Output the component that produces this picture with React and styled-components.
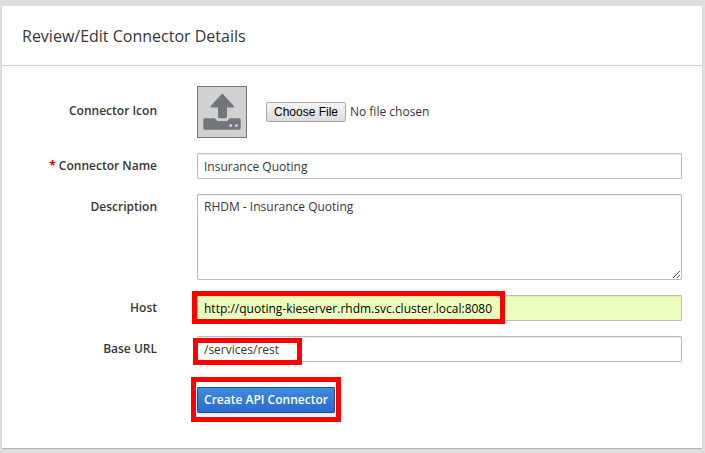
import React from "react";
import styled, { createGlobalStyle, css } from "styled-components";

const GlobalStyle = createGlobalStyle`
  *, *::before, *::after { box-sizing: border-box; }
  html, body { margin: 0; height: 100%; overflow: hidden; background: #dfdfdf; }
  body { font-family: "Open Sans", "Liberation Sans", sans-serif; font-size: 12px; line-height: 20px; color: #363636; }
`;

const Page = styled.main`
  height: 453px;
  padding: 6px 3px 5px 2px;
  background: #dfdfdf;
`;

const Card = styled.section`
  height: 442px;
  background: #fff;
  box-shadow: 0 1px 1px rgba(3, 3, 3, 0.18);
`;

const CardHeader = styled.header`
  height: 60px;
  padding: 20px 20px 0;
  border-bottom: 1px solid #d1d1d1;
`;

const Title = styled.h2`
  margin: 0;
  font-size: 16px;
  font-weight: 400;
  line-height: 20px;
`;

const Form = styled.form`
  display: flex;
  flex-direction: column;
  gap: 15px;
  padding: 20px 20px 0 0;
`;

const Row = styled.div`
  display: grid;
  grid-template-columns: 155px 485px;
  column-gap: 40px;
`;

const Label = styled.label`
  padding-top: ${(p) => p.$top ?? 3}px;
  text-align: right;
  font-weight: 600;
  white-space: nowrap;
`;

const Required = styled.span`
  color: #e00000;
  font-weight: 700;
`;

const FieldSlot = styled.div`
  position: relative;
  display: flex;
`;

const fieldStyle = css`
  display: block;
  width: 100%;
  margin: 0;
  border: 1px solid #bbb;
  border-radius: 1px;
  box-shadow: inset 0 1px 1px rgba(3, 3, 3, 0.075);
  font: inherit;
  color: #363636;
  outline: none;
`;

const Input = styled.input`
  ${fieldStyle}
  height: 26px;
  padding: 2px 6px;
  background: ${(p) => (p.$autofilled ? "#edffbc" : "#fff")};
  color: ${(p) => (p.$autofilled ? "#000" : "#363636")};
`;

const TextArea = styled.textarea`
  ${fieldStyle}
  height: 86px;
  padding: 2px 6px;
  background: #fff;
  resize: none;
`;

const Grip = styled.svg`
  position: absolute;
  right: 2px;
  bottom: 2px;
`;

const UploadRow = styled.div`
  display: flex;
  align-items: center;
`;

const IconTile = styled.div`
  width: 50px;
  height: 52px;
  margin-right: 19px;
  background: #d1d1d1;
  border: 1px solid #72767b;
`;

const FileButton = styled.button`
  width: 80px;
  height: 20px;
  padding: 0;
  border: 1px solid #a6a6a6;
  border-radius: 2px;
  background: linear-gradient(#f5f5f5, #dcdcdc);
  color: #000;
  font: 12px/17px "Liberation Sans", Arial, sans-serif;
`;

const FileStatus = styled.span`
  margin-left: 4px;
`;

const Actions = styled.div`
  display: flex;
  padding: 10px 0 0 195px;
`;

const ButtonSlot = styled.div`
  position: relative;
`;

const PrimaryButton = styled.button`
  display: block;
  width: 138px;
  height: 26px;
  padding: 0 0 1px;
  border: 1px solid #1f4b99;
  border-radius: 1px;
  background: linear-gradient(#3b8ddd, #2d69ce);
  box-shadow: 0 2px 3px rgba(3, 3, 3, 0.1);
  color: #fff;
  font: 600 12px/20px "Open Sans", sans-serif;
  white-space: nowrap;
`;

const Highlight = styled.div`
  position: absolute;
  left: ${(p) => p.$left}px;
  top: ${(p) => p.$top}px;
  width: ${(p) => p.$width}px;
  height: ${(p) => p.$height}px;
  border: 5px solid #f00;
  pointer-events: none;
`;

function UploadIcon() {
  return (
    <svg width="48" height="50" viewBox="0 0 48 50" fill="#72767b" aria-hidden="true">
      <path d="M23.5 7.2Q24.3 6.500 25.100 7.200L35.900 18.900Q36.600 20.500 35.200 20.500H29V29.700Q29 31.200 27.500 31.200H21.500Q20 31.200 20 29.700V20.500H13.400Q12 20.500 12.700 18.900Z" />
      <path fillRule="evenodd" d="M7 31.200h9.300c1 0 1.300.600 1.700 1.400.600 1.100 1.500 1.500 2.700 1.500h7.200c1.300 0 2.100-.500 2.600-1.600.400-.900.800-1.300 1.700-1.300H41q1.700 0 1.700 1.700v8.100q0 1.700-1.700 1.700H7q-1.700 0-1.700-1.700v-8.100Q5.300 31.200 7 31.200Zm25.800 5.900a1.500 1.500 0 1 0 0 3 1.500 1.500 0 0 0 0-3Zm5.700 0a1.500 1.500 0 1 0 0 3 1.500 1.500 0 0 0 0-3Z" />
    </svg>
  );
}

function ResizeGrip() {
  return (
    <Grip width="7" height="7" viewBox="0 0 7 7" fill="#555" shapeRendering="crispEdges" aria-hidden="true">
      {[0, 1, 2, 3, 4, 5, 6].map((i) => (
        <rect key={i} x={i} y={6 - i} width="1" height="1" />
      ))}
      {[4, 5, 6].map((i) => (
        <rect key={`s${i}`} x={i} y={10 - i} width="1" height="1" />
      ))}
    </Grip>
  );
}

export default function App() {
  return (
    <>
      <GlobalStyle />
      <Page>
        <Card>
          <CardHeader>
            <Title>Review/Edit Connector Details</Title>
          </CardHeader>
          <Form onSubmit={(e) => e.preventDefault()}>
            <Row>
              <Label $top={15}>Connector Icon</Label>
              <UploadRow>
                <IconTile>
                  <UploadIcon />
                </IconTile>
                <FileButton type="button">Choose File</FileButton>
                <FileStatus>No file chosen</FileStatus>
              </UploadRow>
            </Row>
            <Row>
              <Label htmlFor="name">
                <Required>*</Required> Connector Name
              </Label>
              <FieldSlot>
                <Input id="name" defaultValue="Insurance Quoting" />
              </FieldSlot>
            </Row>
            <Row>
              <Label htmlFor="description">Description</Label>
              <FieldSlot>
                <TextArea id="description" defaultValue="RHDM - Insurance Quoting" />
                <ResizeGrip />
              </FieldSlot>
            </Row>
            <Row>
              <Label htmlFor="host">Host</Label>
              <FieldSlot>
                <Input id="host" $autofilled defaultValue="http://quoting-kieserver.rhdm.svc.cluster.local:8080" />
                <Highlight $left={-5} $top={-4} $width={313} $height={33} />
              </FieldSlot>
            </Row>
            <Row>
              <Label htmlFor="base-url">Base URL</Label>
              <FieldSlot>
                <Input id="base-url" defaultValue="/services/rest" />
                <Highlight $left={-4} $top={2} $width={109} $height={27} />
              </FieldSlot>
            </Row>
            <Actions>
              <ButtonSlot>
                <PrimaryButton type="submit">Create API Connector</PrimaryButton>
                <Highlight $left={-6} $top={-10} $width={150} $height={45} />
              </ButtonSlot>
            </Actions>
          </Form>
        </Card>
      </Page>
    </>
  );
}
